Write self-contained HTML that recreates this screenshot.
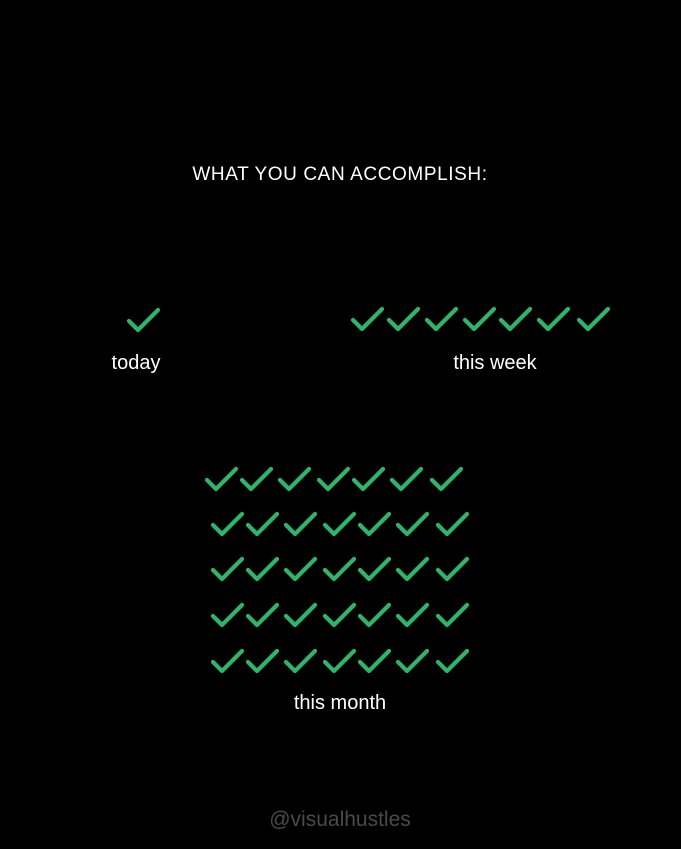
<!DOCTYPE html>
<html><head><meta charset="utf-8"><style>
html,body{margin:0;padding:0;background:#000;}
body{width:681px;height:849px;position:relative;overflow:hidden;font-family:"Liberation Sans",sans-serif;}
.t{position:absolute;color:#fff;white-space:nowrap;transform:translateX(-50%);}
svg{position:absolute;left:0;top:0;}
</style></head><body>
<div class="t" style="left:340px;top:164px;font-size:19px;letter-spacing:0.6px;">WHAT YOU CAN ACCOMPLISH:</div>
<div class="t" style="left:136px;top:352px;font-size:20px;">today</div>
<div class="t" style="left:495px;top:352px;font-size:20px;">this week</div>
<div class="t" style="left:340px;top:692px;font-size:20px;">this month</div>
<div class="t" style="left:340px;top:808px;font-size:21px;color:#4a4a4a;">@visualhustles</div>
<svg width="681" height="849" viewBox="0 0 681 849">
<defs><polyline id="c" points="2,14 11,23 31,3" fill="none" stroke="#2db56a" stroke-width="4.2" stroke-linecap="round" stroke-linejoin="round"/></defs>
<use href="#c" x="127" y="307"/>
<use href="#c" x="351" y="306"/><use href="#c" x="387" y="306"/><use href="#c" x="425" y="306"/><use href="#c" x="463" y="306"/><use href="#c" x="499" y="306"/><use href="#c" x="537" y="306"/><use href="#c" x="577" y="306"/>
<g id="r1"><use href="#c" x="205" y="466"/><use href="#c" x="240" y="466"/><use href="#c" x="278" y="466"/><use href="#c" x="317" y="466"/><use href="#c" x="352" y="466"/><use href="#c" x="390" y="466"/><use href="#c" x="430" y="466"/></g>
<g id="r2"><use href="#c" x="211" y="511"/><use href="#c" x="246" y="511"/><use href="#c" x="284" y="511"/><use href="#c" x="323" y="511"/><use href="#c" x="358" y="511"/><use href="#c" x="396" y="511"/><use href="#c" x="436" y="511"/></g>
<use href="#r2" y="45"/>
<use href="#r2" y="91"/>
<use href="#r2" y="137"/>
</svg>
</body></html>
